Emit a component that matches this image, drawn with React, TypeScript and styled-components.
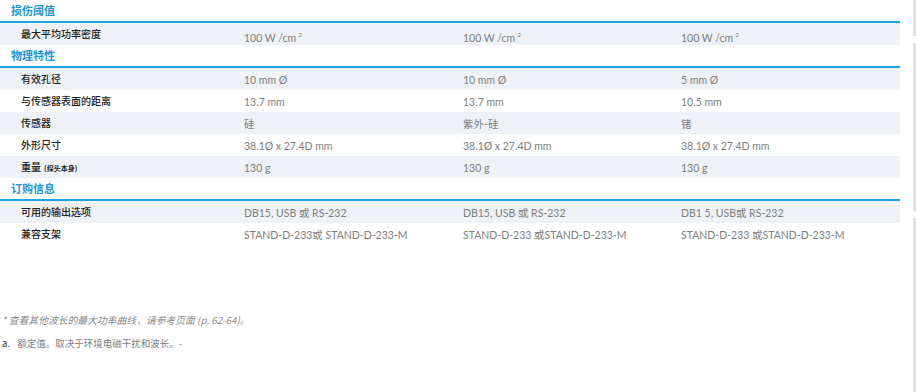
import React from 'react';

import styled, { createGlobalStyle } from 'styled-components';

const GlobalStyle = createGlobalStyle`
  html, body {
    margin: 0;
    padding: 0;
    background: #ffffff;
  }
  body {
    font-family: "Noto Sans CJK SC", "Noto Sans", sans-serif;
  }
`;

const Page = styled.div`
  display: flex;
  flex-direction: row;
  width: 916px;
  height: 392px;
  overflow: hidden;
`;

const Main = styled.div`
  display: flex;
  flex-direction: column;
  width: 900px;
`;

const Table = styled.div`
  display: flex;
  flex-direction: column;
`;

const SectionTitle = styled.div`
  height: 19px;
  padding: 2px 0 0 11px;
  border-bottom: 2px solid #1ba6df;
  font-size: 11px;
  line-height: 17px;
  font-weight: 700;
  color: #1b95d3;
`;

const TableRow = styled.div<{ $shaded: boolean }>`
  display: grid;
  grid-template-columns: 232px 219px 218px 1fr;
  align-items: start;
  height: 22px;
  background: ${(p) => (p.$shaded ? '#eef1f5' : '#ffffff')};
`;

const Label = styled.div`
  padding: 3px 0 0 21px;
  font-size: 10px;
  line-height: 15px;
  font-weight: 500;
  color: #222222;
  white-space: nowrap;
`;

const Note = styled.span`
  margin-left: 3px;
  font-size: 7px;
  font-weight: 700;
`;

const Value = styled.div`
  padding: 5px 0 0 12px;
  font-family: Lato, "Noto Sans CJK SC", sans-serif;
  font-size: 10.5px;
  line-height: 14px;
  color: #808080;
  white-space: nowrap;
`;

const Sup = styled.sup`
  font-size: 6.5px;
  margin-left: 2px;
  vertical-align: 5px;
`;

const Footnotes = styled.div`
  display: flex;
  flex-direction: column;
  gap: 9px;
  padding: 68px 0 0 2px;
`;

const FootnoteStar = styled.div`
  font-size: 9.8px;
  line-height: 14px;
  font-style: italic;
  color: #8a8a8a;
`;

const Footnote = styled.div`
  font-size: 9.5px;
  line-height: 14px;
  color: #7d7d7d;

  b {
    font-weight: 400;
    color: #333;
    margin-right: 5px;
  }
`;

const SideRail = styled.div`
  display: flex;
  flex-direction: column;
  gap: 7px;
  margin-left: 13px;
  width: 3px;
`;

const RailPiece = styled.div<{ $height: number }>`
  height: ${(p) => p.$height}px;
  background: #dfe2e7;
`;

type Row = { label: string; note?: string; values: React.ReactNode[] };
type Section = { title: string; rows: Row[] };

const PowerDensity: React.FC = () => (
  <>
    100 W /cm<Sup>2</Sup>
  </>
);

const sections: Section[] = [
  {
    title: '损伤阈值',
    rows: [
      {
        label: '最大平均功率密度',
        values: [<PowerDensity />, <PowerDensity />, <PowerDensity />],
      },
    ],
  },
  {
    title: '物理特性',
    rows: [
      { label: '有效孔径', values: ['10 mm Ø', '10 mm Ø', '5 mm Ø'] },
      { label: '与传感器表面的距离', values: ['13.7 mm', '13.7 mm', '10.5 mm'] },
      { label: '传感器', values: ['硅', '紫外-硅', '锗'] },
      {
        label: '外形尺寸',
        values: ['38.1Ø x 27.4D mm', '38.1Ø x 27.4D mm', '38.1Ø x 27.4D mm'],
      },
      { label: '重量', note: '(探头本身)', values: ['130 g', '130 g', '130 g'] },
    ],
  },
  {
    title: '订购信息',
    rows: [
      {
        label: '可用的输出选项',
        values: ['DB15, USB 或 RS-232', 'DB15, USB 或 RS-232', 'DB1 5, USB或 RS-232'],
      },
      {
        label: '兼容支架',
        values: [
          'STAND-D-233或 STAND-D-233-M',
          'STAND-D-233 或STAND-D-233-M',
          'STAND-D-233 或STAND-D-233-M',
        ],
      },
    ],
  },
];

const App: React.FC = () => {
  return (
    <Page>
      <GlobalStyle />
      <Main>
        <Table>
          {sections.map((section) => (
            <div key={`section--${section.title}`}>
              <SectionTitle>{section.title}</SectionTitle>
              {section.rows.map((row, i) => (
                <TableRow key={`row--${row.label}`} $shaded={i % 2 === 0}>
                  <Label>
                    {row.label}
                    {row.note && <Note>{row.note}</Note>}
                  </Label>
                  {row.values.map((value, j) => (
                    <Value key={`value--${row.label}-${j}`}>{value}</Value>
                  ))}
                </TableRow>
              ))}
            </div>
          ))}
        </Table>
        <Footnotes>
          <FootnoteStar>* 查看其他波长的最大功率曲线，请参考页面 (p. 62-64)。</FootnoteStar>
          <Footnote>
            <b>a.</b> 额定值。取决于环境电磁干扰和波长。-
          </Footnote>
        </Footnotes>
      </Main>
      <SideRail>
        <RailPiece $height={36} />
        <RailPiece $height={169} />
        <RailPiece $height={174} />
      </SideRail>
    </Page>
  );
};

export default App;
